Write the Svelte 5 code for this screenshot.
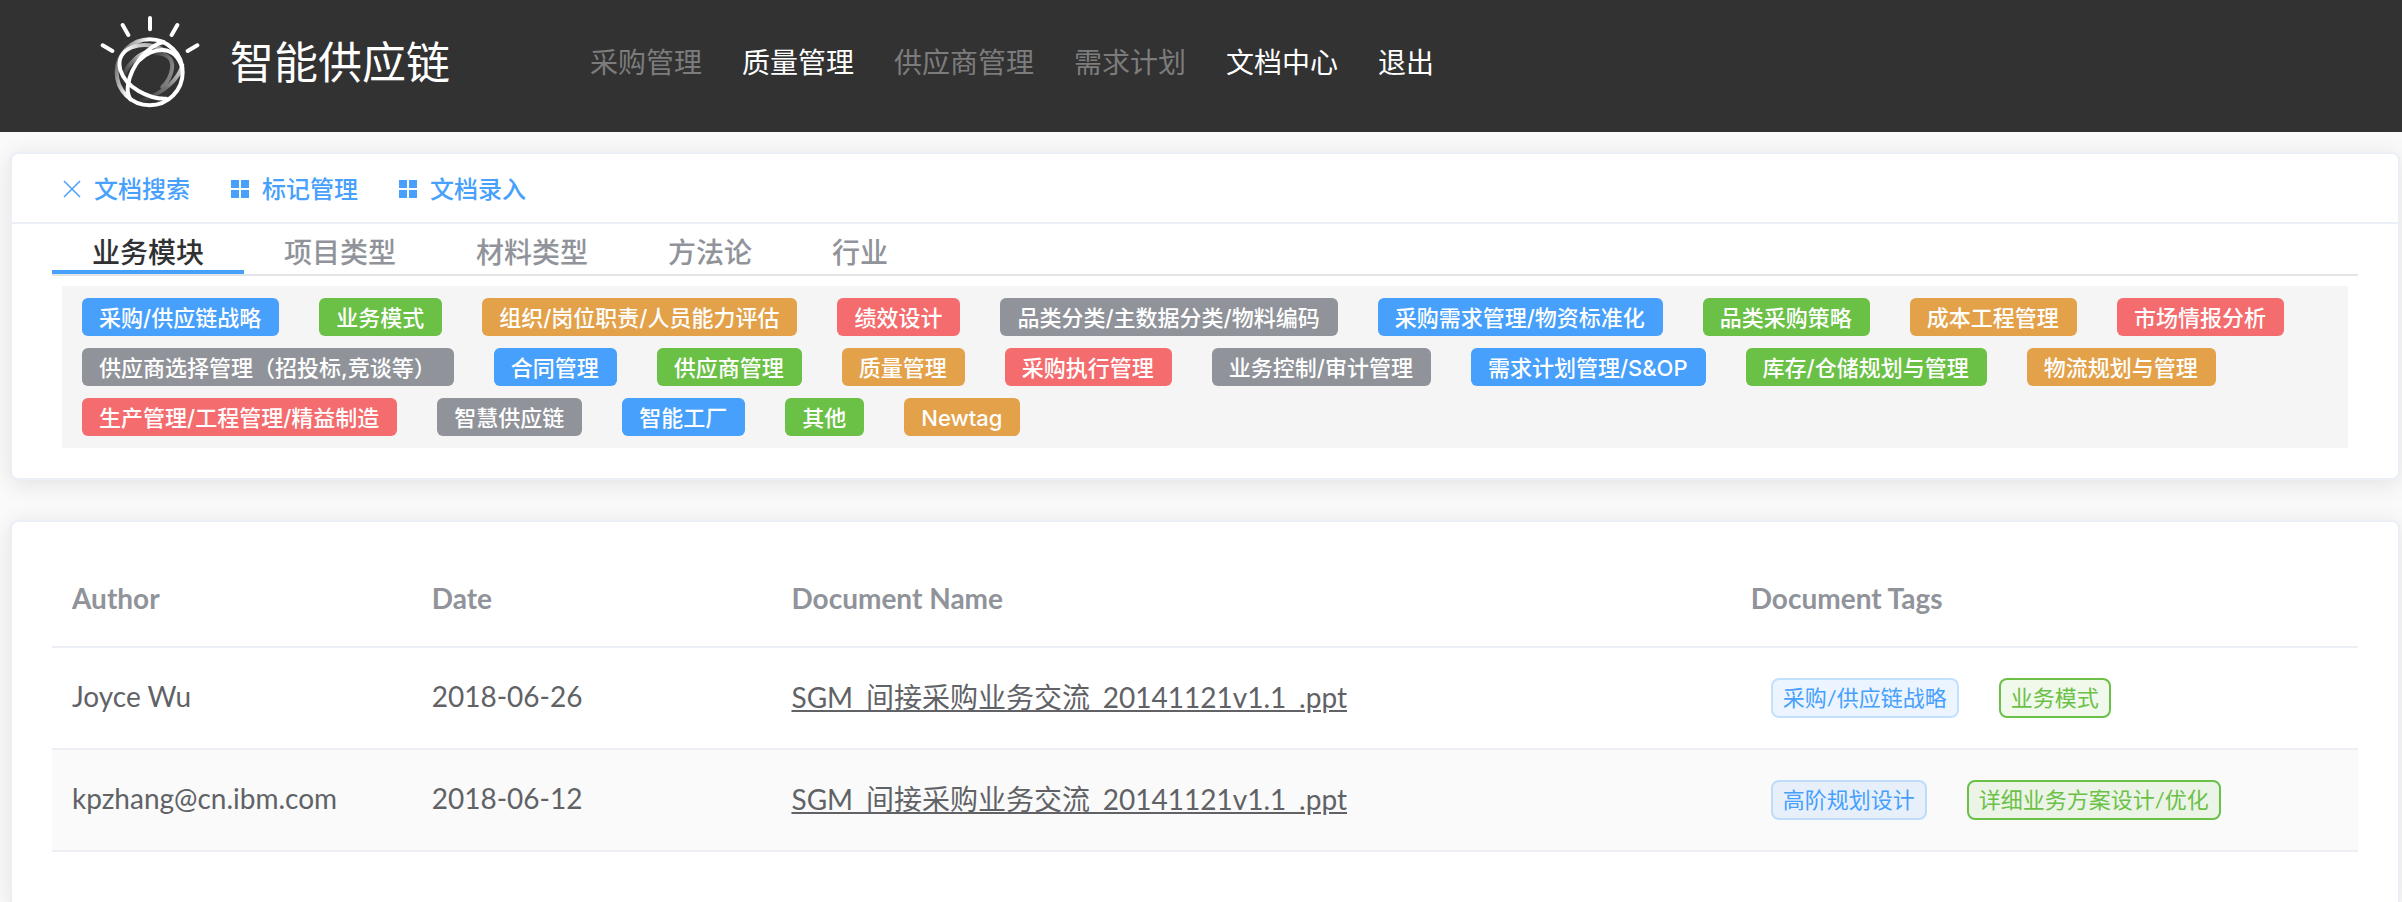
<script>
  const navItems = [
    { label: '采购管理', enabled: false },
    { label: '质量管理', enabled: true },
    { label: '供应商管理', enabled: false },
    { label: '需求计划', enabled: false },
    { label: '文档中心', enabled: true },
    { label: '退出', enabled: true }
  ];

  const tools = [
    { label: '文档搜索', icon: 'close' },
    { label: '标记管理', icon: 'menu' },
    { label: '文档录入', icon: 'menu' }
  ];

  const tabs = ['业务模块', '项目类型', '材料类型', '方法论', '行业'];
  let activeTab = $state('业务模块');

  const kinds = ['primary', 'success', 'warning', 'danger', 'info'];
  const tags = [
    '采购/供应链战略',
    '业务模式',
    '组织/岗位职责/人员能力评估',
    '绩效设计',
    '品类分类/主数据分类/物料编码',
    '采购需求管理/物资标准化',
    '品类采购策略',
    '成本工程管理',
    '市场情报分析',
    '供应商选择管理（招投标,竞谈等）',
    '合同管理',
    '供应商管理',
    '质量管理',
    '采购执行管理',
    '业务控制/审计管理',
    '需求计划管理/S&OP',
    '库存/仓储规划与管理',
    '物流规划与管理',
    '生产管理/工程管理/精益制造',
    '智慧供应链',
    '智能工厂',
    '其他',
    'Newtag'
  ];

  const documents = [
    {
      author: 'Joyce Wu',
      date: '2018-06-26',
      name: 'SGM_间接采购业务交流_20141121v1.1_.ppt',
      tags: ['采购/供应链战略', '业务模式']
    },
    {
      author: 'kpzhang@cn.ibm.com',
      date: '2018-06-12',
      name: 'SGM_间接采购业务交流_20141121v1.1_.ppt',
      tags: ['高阶规划设计', '详细业务方案设计/优化']
    }
  ];
</script>

<header class="topbar">
  <a class="brand" href="#home">
    <svg class="logo" viewBox="15 15 300 282" aria-hidden="true">
      <defs>
        <linearGradient id="ring" x1="0" y1="0.3" x2="0.8" y2="0.6">
          <stop offset="0" stop-color="#6a6a6a" />
          <stop offset="0.4" stop-color="#fff" />
        </linearGradient>
        <linearGradient id="left" x1="0" y1="1" x2="1" y2="0">
          <stop offset="0.5" stop-color="#fff" />
          <stop offset="1" stop-color="#888" />
        </linearGradient>
        <linearGradient id="right" x1="1" y1="0" x2="0" y2="1">
          <stop offset="0" stop-color="#ddd" />
          <stop offset="0.5" stop-color="#777" />
          <stop offset="1" stop-color="#3a3a3a" />
        </linearGradient>
        <linearGradient id="inner" x1="0" y1="0" x2="1" y2="0.6">
          <stop offset="0" stop-color="#444" />
          <stop offset="1" stop-color="#888" />
        </linearGradient>
      </defs>
      <g fill="none" stroke="#fff" stroke-width="12" stroke-linecap="round">
        <path stroke="url(#inner)" d="M182 130C210 130 236 142 231 176C228 196 218 215 202 231" />
        <path stroke="url(#right)" d="M262 166C252 205 212 246 140 272" />
        <path stroke="url(#right)" d="M150 128C125 138 92 170 86 200" />
        <circle cx="164" cy="187" r="99" stroke="url(#ring)" />
        <path stroke="url(#left)" d="M214 266C160 268 92 232 76 180C68 150 80 124 112 111C144 100 182 105 208 122" />
        <path d="M206 96C160 106 108 165 99 225C96 243 99 256 106 268" />
        <path d="M134 150C152 130 180 119 205 120C232 122 252 142 262 174" />
        <path d="M165 24v34M83 45l17 30M247 45l-17 30M23 106l29 17M307 106l-29 17" />
      </g>
    </svg>
    <span>智能供应链</span>
  </a>
  <nav>
    {#each navItems as item}
      <a href="#nav" class:disabled={!item.enabled}>{item.label}</a>
    {/each}
  </nav>
</header>

<main>
  <section class="card filters">
    <div class="toolbar">
      {#each tools as tool}
        <button type="button" class="tool">
          <svg viewBox="0 0 24 24" aria-hidden="true">
            {#if tool.icon === 'close'}
              <path d="M4 4l16 16M20 4L4 20" fill="none" stroke="currentColor" stroke-width="1.500" />
            {:else}
              <path d="M3 3h8v8H3zM13 3h8v8h-8zM3 13h8v8H3zM13 13h8v8h-8z" fill="currentColor" />
            {/if}
          </svg>
          <span>{tool.label}</span>
        </button>
      {/each}
    </div>
    <div class="tabs" role="tablist">
      {#each tabs as tab}
        <button
          type="button"
          role="tab"
          aria-selected={activeTab === tab}
          class:active={activeTab === tab}
          onclick={() => (activeTab = tab)}>{tab}</button>
      {/each}
    </div>
    <div class="tag-panel">
      {#each tags as tag, i}
        <button type="button" class="tag {kinds[i % kinds.length]}">{tag}</button>
      {/each}
    </div>
  </section>

  <section class="card results">
    <table>
      <colgroup>
        <col class="narrow" />
        <col class="narrow" />
        <col class="wide" />
        <col />
      </colgroup>
      <thead>
        <tr>
          <th scope="col">Author</th>
          <th scope="col">Date</th>
          <th scope="col">Document Name</th>
          <th scope="col">Document Tags</th>
        </tr>
      </thead>
      <tbody>
        {#each documents as doc}
          <tr>
            <td>{doc.author}</td>
            <td>{doc.date}</td>
            <td><a href="#document">{doc.name}</a></td>
            <td class="label-cell">
              <div class="labels">
                {#each doc.tags as tag, i}
                  <span class="label" class:green={i === 1}>{tag}</span>
                {/each}
              </div>
            </td>
          </tr>
        {/each}
      </tbody>
    </table>
  </section>
</main>

<style>
  :global(body) {
    background: #fafafa;
    font-family: Lato, 'Noto Sans CJK SC', sans-serif;
    font-size: 28px;
    color: #606266;
  }

  :global(#app) {
    display: flex;
    flex-direction: column;
    min-height: 100vh;
  }

  button {
    margin: 0;
    border: 0;
    background: none;
    font-family: inherit;
    cursor: pointer;
  }

  .topbar {
    display: flex;
    align-items: center;
    gap: 140px;
    box-sizing: border-box;
    height: 132px;
    padding: 0 100px 8px;
    background: #323232;
  }

  .brand {
    display: flex;
    align-items: center;
    gap: 30px;
    color: #fff;
    font-size: 44px;
    line-height: 64px;
    text-decoration: none;
    white-space: nowrap;
  }

  .logo {
    width: 100px;
    height: 94px;
  }

  nav {
    display: flex;
    gap: 40px;
    white-space: nowrap;
  }

  nav a {
    color: #fff;
    line-height: 40px;
    text-decoration: none;
  }

  nav a.disabled {
    color: #7c7c7c;
  }

  main {
    display: flex;
    flex: 1;
    flex-direction: column;
    gap: 40px;
    padding: 20px 2px 0 10px;
  }

  .card {
    border: 2px solid #ebeef5;
    border-radius: 8px;
    background: #fff;
    box-shadow: 0 4px 24px rgba(0, 0, 0, 0.1);
  }

  .filters {
    padding-bottom: 30px;
  }

  .toolbar {
    display: flex;
    gap: 38px;
    padding: 18px 48px 16px;
    border-bottom: 2px solid #ebeef5;
  }

  .tool {
    display: flex;
    align-items: center;
    gap: 10px;
    padding: 0;
    color: #46a0fc;
    font-size: 24px;
    font-weight: 500;
    line-height: 34px;
  }

  .tool svg {
    width: 24px;
    height: 24px;
  }

  .tabs {
    display: flex;
    margin: 0 40px;
    border-bottom: 2px solid #e4e4e6;
  }

  .tabs button {
    padding: 10px 40px 0;
    border-bottom: 4px solid transparent;
    color: #909399;
    font-size: 28px;
    font-weight: 500;
    line-height: 36px;
  }

  .tabs button.active {
    border-bottom-color: #46a0fc;
    color: #303133;
  }

  .tag-panel {
    display: flex;
    flex-wrap: wrap;
    gap: 12px 40px;
    margin: 10px 50px 0;
    padding: 12px 20px;
    background: #f5f5f5;
  }

  .tag {
    padding: 2px 18px 0 17px;
    border-radius: 6px;
    color: #fff;
    font-family: Inter, 'Noto Sans CJK SC', sans-serif;
    font-size: 22px;
    font-weight: 500;
    line-height: 36px;
    white-space: nowrap;
  }

  .primary { background: #46a0fc; }
  .success { background: #6bc046; }
  .warning { background: #e3a14a; }
  .danger { background: #f46c6e; }
  .info { background: #909399; }

  .results {
    flex: 1;
    padding: 32px 40px 0;
    border-bottom: 0;
    border-radius: 8px 8px 0 0;
  }

  table {
    width: 100%;
    border-collapse: separate;
    border-spacing: 0;
    table-layout: fixed;
  }

  .narrow { width: 15.6%; }
  .wide { width: 41.6%; }

  th,
  td {
    box-sizing: border-box;
    padding: 0 20px 4px;
    border-bottom: 2px solid #ebeef5;
    text-align: left;
  }

  th {
    height: 94px;
    color: #909399;
    font-weight: 700;
  }

  td {
    height: 102px;
  }

  td.label-cell {
    padding-bottom: 0;
  }

  tbody tr:nth-child(even) {
    background: #fafafa;
  }

  td a {
    color: inherit;
  }

  .labels {
    display: flex;
    gap: 40px;
    padding-left: 20px;
  }

  .label {
    padding: 0 10px;
    border: 2px solid rgba(70, 160, 252, 0.25);
    border-radius: 8px;
    background: rgba(70, 160, 252, 0.1);
    color: #46a0fc;
    font-size: 22px;
    line-height: 36px;
    white-space: nowrap;
  }

  .label.green {
    border-color: #6bc046;
    background: rgba(107, 192, 70, 0.1);
    color: #6bc046;
  }
</style>
